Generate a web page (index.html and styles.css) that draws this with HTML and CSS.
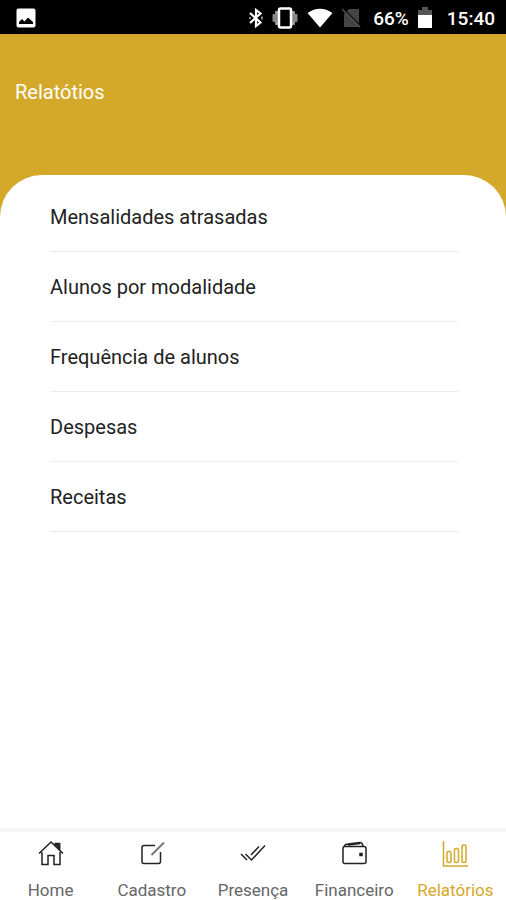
FILE: index.html
```
<!DOCTYPE html>
<html lang="pt-BR">
<head>
    <meta charset="UTF-8">
    <meta name="viewport" content="width=device-width, initial-scale=1.0">
    <title>Relatórios</title>
    <link rel="stylesheet" href="styles.css">
</head>
<body>
    <div class="status-bar">
        <svg class="status-photo" width="20" height="20" viewBox="0 0 20 20">
            <rect x="0.5" y="0.5" width="19" height="19" rx="2" fill="#fff"/>
            <path d="M3 16v-2l3-3 2.500 2.500 3.500-4L17 14v2z" fill="#000"/>
        </svg>
        <div class="status-icons">
            <svg width="14" height="20" viewBox="0 0 14 20" fill="none" stroke="#fff" stroke-width="2.2">
                <path d="M1 5l10.500 9.500L7 18v-16l4.500 3.500L1 15"/>
                <path d="M13 8.500v3M1 9v2" stroke="#aaa" stroke-width="1.5"/>
            </svg>
            <svg width="26" height="22" viewBox="0 0 26 22">
                <rect x="3" y="4" width="20" height="14" rx="1" fill="#999"/>
                <rect x="0.5" y="7" width="25" height="8" rx="1" fill="#888"/>
                <rect x="7" y="1.500" width="12" height="19" rx="1.500" fill="#000" stroke="#fff" stroke-width="2.5"/>
            </svg>
            <svg width="26" height="20" viewBox="0 0 26 20">
                <path d="M0.500 5Q13-3.500 25.500 5L13 19.500z" fill="#fff"/>
            </svg>
            <svg width="19" height="20" viewBox="0 0 19 20">
                <path d="M7 1h10v18H2V6z" fill="#444"/>
                <path d="M1 1l18 18" stroke="#000" stroke-width="2"/>
                <path d="M0 1l18 18" stroke="#555" stroke-width="1.5"/>
            </svg>
        </div>
        <span class="battery-level">66%</span>
        <svg class="battery" width="14" height="22" viewBox="0 0 14 22">
            <path d="M4 0h6v3h4v6H0V3h4z" fill="#555"/>
            <path d="M0 8h14v13H0z" fill="#fff"/>
        </svg>
        <span class="clock">15:40</span>
    </div>

    <header class="header">
        <h1>Relatótios</h1>
    </header>

    <main class="content">
        <ul class="report-list">
            <li><a href="#">Mensalidades atrasadas</a></li>
            <li><a href="#">Alunos por modalidade</a></li>
            <li><a href="#">Frequência de alunos</a></li>
            <li><a href="#">Despesas</a></li>
            <li><a href="#">Receitas</a></li>
        </ul>
    </main>

    <nav class="tab-bar">
        <a href="#" class="tab">
            <svg width="28" height="28" viewBox="0 0 28 28">
                <path d="M2 13.500L14 2 26 13.500M5 12v12.500h6v-9h6v9h6V12M18.500 6V3.500h4v6.500"/>
                <path d="M18.500 4h4v5z" fill="#444"/>
            </svg>
            <span>Home</span>
        </a>
        <a href="#" class="tab">
            <svg width="28" height="28" viewBox="0 0 28 28">
                <path d="M17 5.500H6Q4 5.500 4 7.500v14q0 2 2 2h14.500q2 0 2-2V12"/>
                <path d="M26 2.500L13.500 15" stroke="#777" stroke-width="2"/>
            </svg>
            <span>Cadastro</span>
        </a>
        <a href="#" class="tab">
            <svg width="28" height="28" viewBox="0 0 28 28">
                <path d="M2 14l6 6M6.500 14l6 6L26 5.500M12 15l8-8.500"/>
            </svg>
            <span>Presença</span>
        </a>
        <a href="#" class="tab">
            <svg width="28" height="28" viewBox="0 0 28 28">
                <rect x="3" y="6.500" width="23" height="17" rx="2"/>
                <path d="M4 6.500Q5 4 8 4l12-1.500q2.500 0 3 4M8 5l12-1.500"/>
                <rect x="20" y="13.500" width="2" height="2" fill="#222"/>
            </svg>
            <span>Financeiro</span>
        </a>
        <a href="#" class="tab active">
            <svg width="28" height="28" viewBox="0 0 28 28">
                <path d="M2.500 1v25H27"/>
                <rect x="6" y="11.500" width="4" height="11" rx="1.500"/>
                <rect x="13.500" y="8.500" width="4" height="14" rx="1.500"/>
                <rect x="21" y="5" width="4" height="17.500" rx="1.500"/>
            </svg>
            <span>Relatórios</span>
        </a>
    </nav>
</body>
</html>
```

FILE: styles.css
```
* {
    box-sizing: border-box;
}
body {
    font-family: Roboto, sans-serif;
    margin: 0;
    min-height: 100vh;
    display: flex;
    flex-direction: column;
    background-color: #fff;
    color: #222;
}
a {
    color: inherit;
    text-decoration: none;
}
.status-bar {
    display: flex;
    align-items: center;
    height: 34px;
    padding: 2px 11px 0 16px;
    background-color: #000;
    color: #fff;
    font-size: 19px;
    font-weight: 500;
}
.status-icons {
    display: flex;
    align-items: center;
    gap: 9px;
    margin-left: auto;
}
.battery-level {
    margin-left: 12px;
}
.battery {
    margin: 0 15px 0 9px;
}
.header {
    height: 182px;
    padding: 46px 15px 0;
    background-color: #d4a828;
    color: #fff;
}
.header h1 {
    margin: 0;
    font-size: 20px;
    font-weight: 400;
    line-height: 24px;
}
.content {
    flex: 1;
    margin-top: -41px;
    padding: 7px 48px 0 50px;
    border-radius: 42px 42px 0 0;
    background-color: #fff;
}
.report-list {
    list-style: none;
    margin: 0;
    padding: 0;
}
.report-list a {
    display: block;
    padding: 23px 0 22px;
    border-bottom: 1px solid #ececec;
    font-size: 20px;
    line-height: 24px;
}
.tab-bar {
    display: grid;
    grid-template-columns: repeat(5, 1fr);
    height: 72px;
    border-top: 4px solid #f6f6f6;
}
.tab {
    display: flex;
    flex-direction: column;
    align-items: center;
    gap: 12px;
    padding-top: 8px;
    color: #666;
    font-size: 17px;
    line-height: 20px;
}
.tab svg {
    fill: none;
    stroke: #222;
    stroke-width: 1.5;
}
.tab.active {
    color: #d4a828;
}
.tab.active svg {
    stroke: #d4a828;
}
```
